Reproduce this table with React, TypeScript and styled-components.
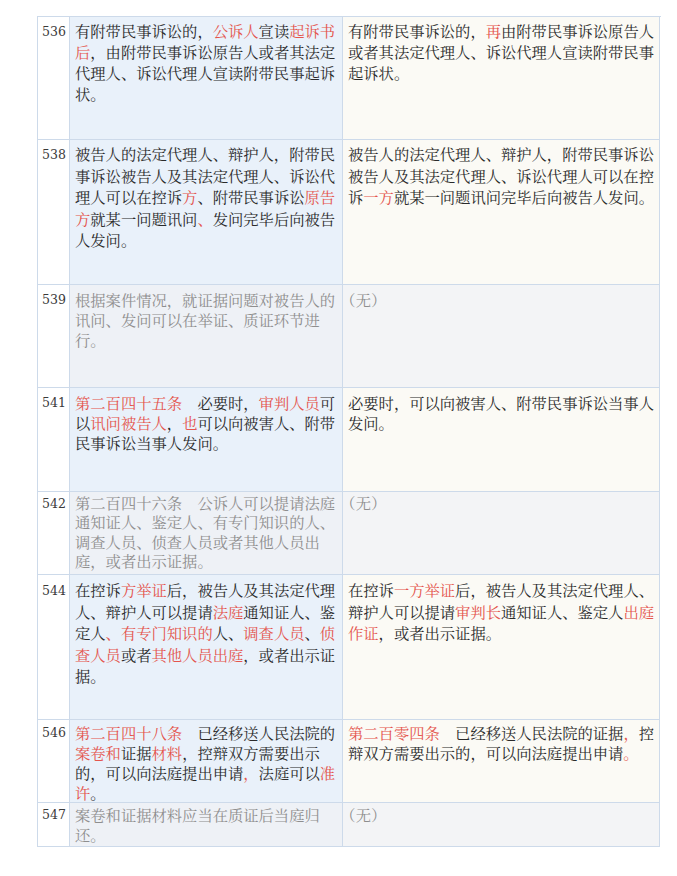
import React from 'react';
import styled, { createGlobalStyle } from 'styled-components';

const Global = createGlobalStyle`
  html, body {
    margin: 0;
    padding: 0;
    background: #ffffff;
  }
`;

const Page = styled.div`
  padding: 16px 0 30px 37px;
  font-family: "Noto Serif CJK SC", "Noto Sans CJK SC", serif;
`;

const Table = styled.div`
  width: 623px;
  border-top: 1px solid #cddaea;
  border-left: 1px solid #cddaea;
`;

const Row = styled.div<{ $h: number }>`
  display: grid;
  grid-template-columns: 32px 273px 317px;
  height: ${p => p.$h}px;
`;

const Cell = styled.div<{ $pt: number; $lh: number }>`
  border-right: 1px solid #cddaea;
  border-bottom: 1px solid #cddaea;
  padding: ${p => p.$pt}px 2px 0 5px;
  font-size: 15.3px;
  line-height: ${p => p.$lh}px;
  text-spacing-trim: trim-start;
  overflow: hidden;
`;

const NumCell = styled(Cell)`
  background: #ffffff;
  padding-left: 4px;
  padding-right: 0;
  font-family: "DejaVu Serif", serif;
  font-size: 12.5px;
  color: #3a3a3a;
`;

const OldCell = styled(Cell)<{ $muted?: boolean }>`
  background: ${p => (p.$muted ? '#eef1f6' : '#e9f1fa')};
  color: ${p => (p.$muted ? '#8e8e8e' : '#2a2a2a')};
  padding-right: 3px;
`;

const NewCell = styled(Cell)<{ $muted?: boolean }>`
  background: ${p => (p.$muted ? '#f3f4f6' : '#fbfaf5')};
  color: ${p => (p.$muted ? '#8e8e8e' : '#2a2a2a')};
`;

const Red = styled.span`
  color: #e4554d;
`;

type Part = string | { r: string };

interface RowData {
  no: string;
  h: number;
  pt: number;
  lh: number;
  muted?: boolean;
  left: Part[];
  right: Part[];
}

const rows: RowData[] = [
  {
    no: '536', h: 123, pt: 3, lh: 21,
    left: ['有附带民事诉讼的，', { r: '公诉人' }, '宣读', { r: '起诉书后' }, '，由附带民事诉讼原告人或者其法定代理人、诉讼代理人宣读附带民事起诉状。'],
    right: ['有附带民事诉讼的，', { r: '再' }, '由附带民事诉讼原告人或者其法定代理人、诉讼代理人宣读附带民事起诉状。'],
  },
  {
    no: '538', h: 145, pt: 3, lh: 21.5,
    left: ['被告人的法定代理人、辩护人，附带民事诉讼被告人及其法定代理人、诉讼代理人可以在控诉', { r: '方' }, '、附带民事诉讼', { r: '原告方' }, '就某一问题讯问', { r: '、' }, '发问完毕后向被告人发问。'],
    right: ['被告人的法定代理人、辩护人，附带民事诉讼被告人及其法定代理人、诉讼代理人可以在控诉', { r: '一方' }, '就某一问题讯问完毕后向被告人发问。'],
  },
  {
    no: '539', h: 103, pt: 4, lh: 20, muted: true,
    left: ['根据案件情况，就证据问题对被告人的讯问、发问可以在举证、质证环节进行。'],
    right: ['（无）'],
  },
  {
    no: '541', h: 104, pt: 4, lh: 20,
    left: [{ r: '第二百四十五条' }, '　必要时，', { r: '审判人员' }, '可以', { r: '讯问被告人' }, '，', { r: '也' }, '可以向被害人、附带民事诉讼当事人发问。'],
    right: ['必要时，可以向被害人、附带民事诉讼当事人发问。'],
  },
  {
    no: '542', h: 83, pt: 1, lh: 19.4, muted: true,
    left: ['第二百四十六条　公诉人可以提请法庭通知证人、鉴定人、有专门知识的人、调查人员、侦查人员或者其他人员出庭，或者出示证据。'],
    right: ['（无）'],
  },
  {
    no: '544', h: 145, pt: 4, lh: 21.6,
    left: ['在控诉', { r: '方举证' }, '后，被告人及其法定代理人、辩护人可以提请', { r: '法庭' }, '通知证人、鉴定人', { r: '、有专门知识的' }, '人、', { r: '调查人员' }, '、', { r: '侦查人员' }, '或者', { r: '其他人员出庭' }, '，或者出示证据。'],
    right: ['在控诉', { r: '一方举证' }, '后，被告人及其法定代理人、辩护人可以提请', { r: '审判长' }, '通知证人、鉴定人', { r: '出庭作证' }, '，或者出示证据。'],
  },
  {
    no: '546', h: 83, pt: 2, lh: 20,
    left: [{ r: '第二百四十八条' }, '　已经移送人民法院的', { r: '案卷和' }, '证据', { r: '材料' }, '，控辩双方需要出示的，可以向法庭提出申请', { r: '，' }, '法庭可以', { r: '准许' }, '。'],
    right: [{ r: '第二百零四条' }, '　已经移送人民法院的证据', { r: '，' }, '控辩双方需要出示的，可以向法庭提出申请', { r: '。' }],
  },
  {
    no: '547', h: 44, pt: 1, lh: 20, muted: true,
    left: ['案卷和证据材料应当在质证后当庭归还。'],
    right: ['（无）'],
  },
];

const renderParts = (parts: Part[]) =>
  parts.map((p, i) => (typeof p === 'string' ? <React.Fragment key={i}>{p}</React.Fragment> : <Red key={i}>{p.r}</Red>));

export default function App() {
  return (
    <Page>
      <Global />
      <Table>
        {rows.map(row => (
          <Row key={row.no} $h={row.h}>
            <NumCell $pt={row.pt + 1} $lh={row.lh}>{row.no}</NumCell>
            <OldCell $pt={row.pt} $lh={row.lh} $muted={row.muted}>{renderParts(row.left)}</OldCell>
            <NewCell $pt={row.pt} $lh={row.lh} $muted={row.muted}>{renderParts(row.right)}</NewCell>
          </Row>
        ))}
      </Table>
    </Page>
  );
}
